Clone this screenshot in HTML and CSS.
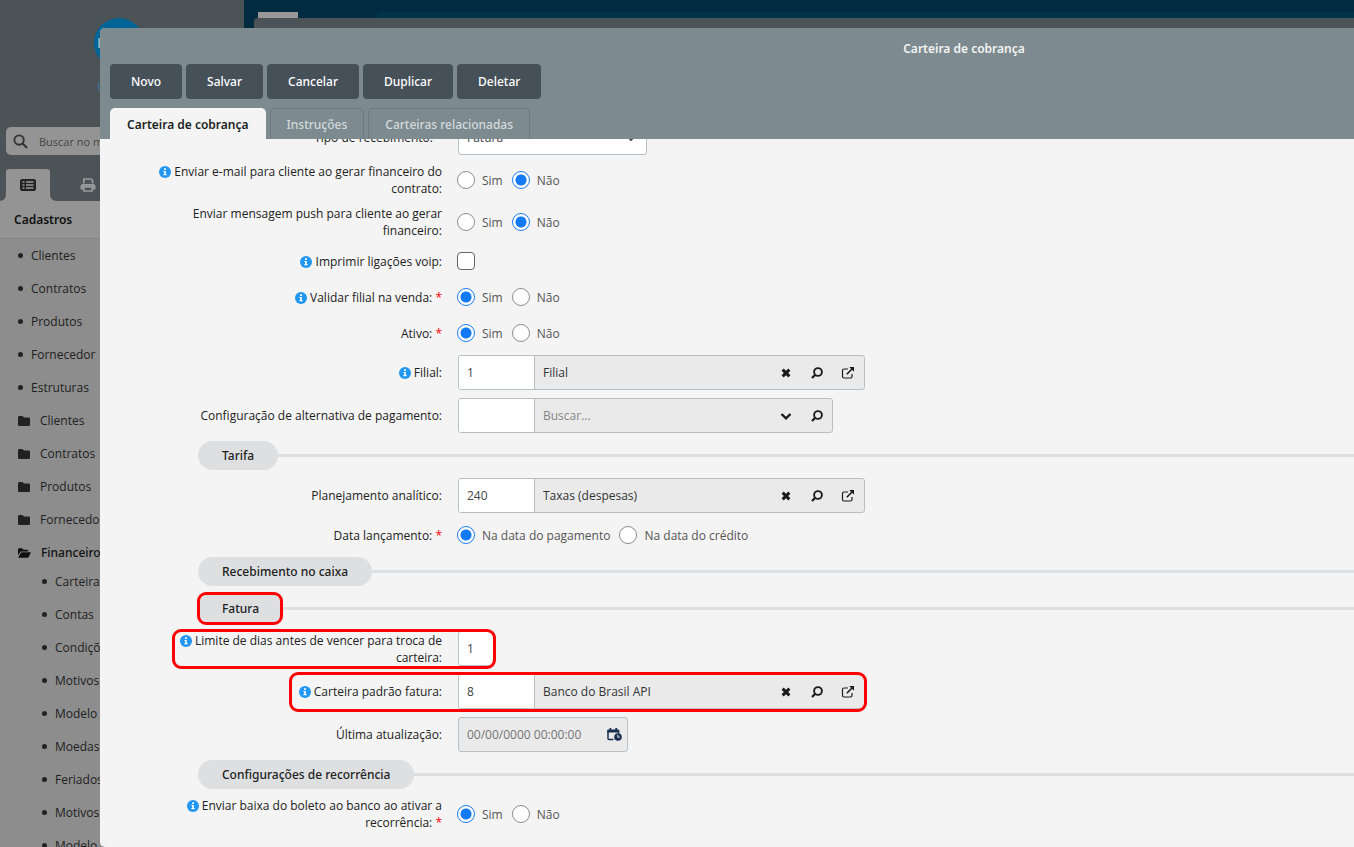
FILE: index.html
```html
<!DOCTYPE html>
<html lang="pt-BR">
<head>
<meta charset="utf-8">
<title>Carteira de cobrança</title>
<link rel="stylesheet" href="styles.css">
</head>
<body>
<svg class="sprite" aria-hidden="true">
  <symbol id="i-info" viewBox="0 0 12 12"><circle cx="6" cy="6" r="6" fill="#2196f3"/><path d="M5.1 2.3h1.8v1.6H5.1zM4.4 4.9h2.4v3.2h.8v1.2H4.4V8.100h.8v-2h-.8z" fill="#fff"/></symbol>
  <symbol id="i-x" viewBox="0 0 10 10"><path d="M2.200 2.200l5.600 5.600M7.800 2.200l-5.600 5.600" stroke="currentColor" stroke-width="2.500"/></symbol>
  <symbol id="i-search" viewBox="0 0 12 12"><circle cx="7" cy="5" r="3.900" fill="none" stroke="currentColor" stroke-width="1.900"/><path d="M4.300 7.700L1 11" stroke="currentColor" stroke-width="2.300"/></symbol>
  <symbol id="i-open" viewBox="0 0 14 14"><path d="M7 3H3Q1.500 3 1.500 4.500v6Q1.500 12 3 12h6.500Q11 12 11 10.500V8" fill="none" stroke="currentColor" stroke-width="1.200"/><path d="M5.800 8.200L11 3" stroke="currentColor" stroke-width="1.600"/><path d="M8.200 1H13v4.800z" fill="currentColor"/></symbol>
  <symbol id="i-down" viewBox="0 0 12 12"><path d="M1.500 4L6 8.300 10.500 4" fill="none" stroke="currentColor" stroke-width="2.400"/></symbol>
  <symbol id="i-folder" viewBox="0 0 12 10"><path d="M1.200 0h3.300L6 1.500h4.800Q12 1.500 12 2.700v6Q12 10 10.800 10H1.200Q0 10 0 8.800V1.200Q0 0 1.200 0z" fill="currentColor"/></symbol>
  <symbol id="i-folder-open" viewBox="0 0 14 10"><path d="M0 7.500V1.200Q0 0 1.200 0h3.300L6 1.500h4Q11 1.500 11 2.700v.8H3.800Q2.600 3.500 2.100 4.400zM.4 9.500L2.900 5q.4-.7 1.200-.7h9.200q.7 0 .4.700L11.500 9.300q-.4.700-1.200.7H.8Q.2 10 .4 9.500z" fill="currentColor"/></symbol>
</svg>

<div class="app">
  <aside class="sidebar">
    <div class="profile"><span class="avatar">I</span><span class="user">I</span></div>
    <label class="menu-search">
      <svg viewBox="0 0 16 16"><circle cx="6.500" cy="6.500" r="5" fill="none" stroke="currentColor" stroke-width="2"/><path d="M10.200 10.200L15 15" stroke="currentColor" stroke-width="2.200"/></svg>
      <input type="text" placeholder="Buscar no menu" aria-label="Buscar no menu">
    </label>
    <div class="side-tabs">
      <button class="side-tab active" aria-label="Menu"><svg viewBox="0 0 16 12"><rect width="16" height="12" rx="2" fill="#222"/><path d="M2.500 3h2M2.500 6h2M2.500 9h2M6 3h7.500M6 6h7.500M6 9h7.500" stroke="#999" stroke-width="1.300"/></svg></button>
      <button class="side-tab" aria-label="Imprimir"><svg viewBox="0 0 16 14"><path d="M3.800 5.500V1h7.400l1.300 1.300V5.500" fill="none" stroke="#999" stroke-width="1.700"/><path d="M3 6h10q2.500 0 2.500 2.500V11.500h-2.500V8.800H3v2.700H.5V8.500Q.5 6 3 6z" fill="#999"/><path d="M3.800 9h8.400v4H3.800z" fill="none" stroke="#999" stroke-width="1.700"/></svg></button>
    </div>
    <h2 class="side-title">Cadastros</h2>
    <ul class="menu">
      <li><i class="dot"></i><a href="#">Clientes</a></li>
      <li><i class="dot"></i><a href="#">Contratos</a></li>
      <li><i class="dot"></i><a href="#">Produtos</a></li>
      <li><i class="dot"></i><a href="#">Fornecedor</a></li>
      <li><i class="dot"></i><a href="#">Estruturas</a></li>
      <li class="folder"><svg><use href="#i-folder"/></svg><a href="#">Clientes</a></li>
      <li class="folder"><svg><use href="#i-folder"/></svg><a href="#">Contratos</a></li>
      <li class="folder"><svg><use href="#i-folder"/></svg><a href="#">Produtos</a></li>
      <li class="folder"><svg><use href="#i-folder"/></svg><a href="#">Fornecedor</a></li>
      <li class="folder open"><svg><use href="#i-folder-open"/></svg><a href="#">Financeiro</a></li>
    </ul>
    <ul class="menu submenu">
      <li><i class="dot"></i><a href="#">Carteiras</a></li>
      <li><i class="dot"></i><a href="#">Contas</a></li>
      <li><i class="dot"></i><a href="#">Condições</a></li>
      <li><i class="dot"></i><a href="#">Motivos</a></li>
      <li><i class="dot"></i><a href="#">Modelo</a></li>
      <li><i class="dot"></i><a href="#">Moedas</a></li>
      <li><i class="dot"></i><a href="#">Feriados</a></li>
      <li><i class="dot"></i><a href="#">Motivos</a></li>
      <li><i class="dot"></i><a href="#">Modelo</a></li>
    </ul>
  </aside>
  <div class="workspace">
    <div class="topbar"><span class="top-tab"></span><span class="top-search"></span></div>
    <div class="back-window"></div>
  </div>
</div>

<main class="modal">
  <header class="modal-head">
    <h1>Carteira de cobrança</h1>
    <div class="actions">
      <button>Novo</button><button>Salvar</button><button>Cancelar</button><button>Duplicar</button><button>Deletar</button>
    </div>
    <nav class="tabs">
      <button class="tab active">Carteira de cobrança</button><button class="tab">Instruções</button><button class="tab">Carteiras relacionadas</button>
    </nav>
  </header>
  <div class="modal-body">
    <form class="form">
      <div class="row">
        <label class="label shifted" for="tipo">Tipo de recebimento:</label>
        <div class="select box"><select id="tipo"><option>Fatura</option></select><svg><use href="#i-down"/></svg></div>
      </div>
      <div class="row">
        <span class="label"><svg class="info"><use href="#i-info"/></svg> Enviar e-mail para cliente ao gerar financeiro do contrato:</span>
        <div class="options"><label><input type="radio" name="email">Sim</label><label><input type="radio" name="email" checked>Não</label></div>
      </div>
      <div class="row">
        <span class="label">Enviar mensagem push para cliente ao gerar financeiro:</span>
        <div class="options"><label><input type="radio" name="push">Sim</label><label><input type="radio" name="push" checked>Não</label></div>
      </div>
      <div class="row">
        <label class="label" for="voip"><svg class="info"><use href="#i-info"/></svg> Imprimir ligações voip:</label>
        <div class="options"><input type="checkbox" id="voip"></div>
      </div>
      <div class="row">
        <span class="label"><svg class="info"><use href="#i-info"/></svg> Validar filial na venda: <b>*</b></span>
        <div class="options"><label><input type="radio" name="validar" checked>Sim</label><label><input type="radio" name="validar">Não</label></div>
      </div>
      <div class="row">
        <span class="label">Ativo: <b>*</b></span>
        <div class="options"><label><input type="radio" name="ativo" checked>Sim</label><label><input type="radio" name="ativo">Não</label></div>
      </div>
      <div class="row">
        <label class="label" for="filial"><svg class="info"><use href="#i-info"/></svg> Filial:</label>
        <div class="lookup box"><input class="code" id="filial" value="1"><input class="desc" value="Filial" aria-label="Filial"><button type="button" aria-label="Limpar"><svg><use href="#i-x"/></svg></button><button type="button" aria-label="Buscar"><svg><use href="#i-search"/></svg></button><button type="button" aria-label="Abrir"><svg class="big"><use href="#i-open"/></svg></button></div>
      </div>
      <div class="row">
        <label class="label" for="alt">Configuração de alternativa de pagamento:</label>
        <div class="lookup box"><input class="code" id="alt"><input class="desc" placeholder="Buscar..." aria-label="Alternativa de pagamento"><button type="button" aria-label="Expandir"><svg><use href="#i-down"/></svg></button><button type="button" aria-label="Buscar"><svg><use href="#i-search"/></svg></button></div>
      </div>
      <div class="section"><h2>Tarifa</h2></div>
      <div class="row">
        <label class="label" for="plan">Planejamento analítico:</label>
        <div class="lookup box"><input class="code" id="plan" value="240"><input class="desc" value="Taxas (despesas)" aria-label="Planejamento analítico"><button type="button" aria-label="Limpar"><svg><use href="#i-x"/></svg></button><button type="button" aria-label="Buscar"><svg><use href="#i-search"/></svg></button><button type="button" aria-label="Abrir"><svg class="big"><use href="#i-open"/></svg></button></div>
      </div>
      <div class="row">
        <span class="label">Data lançamento: <b>*</b></span>
        <div class="options"><label><input type="radio" name="data" checked>Na data do pagamento</label><label><input type="radio" name="data">Na data do crédito</label></div>
      </div>
      <div class="section"><h2>Recebimento no caixa</h2></div>
      <div class="section"><h2>Fatura<span class="mark mark-title"></span></h2></div>
      <div class="row">
        <label class="label" for="limite"><svg class="info"><use href="#i-info"/></svg> Limite de dias antes de vencer para troca de carteira:</label>
        <input class="days box" id="limite" value="1"><span class="mark mark-limit"></span>
      </div>
      <div class="row">
        <label class="label" for="padrao"><svg class="info"><use href="#i-info"/></svg> Carteira padrão fatura:</label>
        <div class="lookup box"><input class="code" id="padrao" value="8"><input class="desc" value="Banco do Brasil API" aria-label="Carteira padrão"><button type="button" aria-label="Limpar"><svg><use href="#i-x"/></svg></button><button type="button" aria-label="Buscar"><svg><use href="#i-search"/></svg></button><button type="button" aria-label="Abrir"><svg class="big"><use href="#i-open"/></svg></button></div><span class="mark mark-wallet"></span>
      </div>
      <div class="row">
        <label class="label" for="ultima">Última atualização:</label>
        <div class="date box"><input id="ultima" placeholder="00/00/0000 00:00:00"><svg viewBox="0 0 15 13"><path d="M6.500 11.500H2Q1 11.500 1 10.500V3h10.500v2.500" fill="none" stroke="currentColor" stroke-width="1.500"/><path d="M.3 4.500V2.500Q.3 1.500 1.300 1.500h1.200V0H4.300v1.500h4V0h1.800v1.500h1.100q1 0 1 1v2z" fill="currentColor"/><circle cx="11" cy="9" r="3.800" fill="currentColor"/><path d="M10.800 6.800v2.400h1.900" fill="none" stroke="#eee" stroke-width="1"/></svg></div>
      </div>
      <div class="section"><h2>Configurações de recorrência</h2></div>
      <div class="row">
        <span class="label"><svg class="info"><use href="#i-info"/></svg> Enviar baixa do boleto ao banco ao ativar a recorrência: <b>*</b></span>
        <div class="options"><label><input type="radio" name="baixa" checked>Sim</label><label><input type="radio" name="baixa">Não</label></div>
      </div>
    </form>
  </div>
</main>
</body>
</html>
```
FILE: styles.css
```css
* { box-sizing: border-box; }
html, body { height: 100%; }
body {
  margin: 0;
  overflow: hidden;
  position: relative;
  font: 12px/17px "Open Sans", "Noto Sans", sans-serif;
  color: #212121;
}
.sprite { position: absolute; width: 0; height: 0; }
button, input, select { font: inherit; color: inherit; border: 0; padding: 0; margin: 0; background: none; outline: 0; }
h1, h2 { margin: 0; font-size: 12px; }
h1, h2, .modal-head button, .menu .open { font-family: "Noto Sans", "Open Sans", sans-serif; }

/* Dimmed application behind the dialog */
.app { display: flex; height: 100%; }
.sidebar { width: 244px; flex: none; display: flex; flex-direction: column; overflow: hidden; background: #4c5356; }
.profile { height: 127px; flex: none; padding-top: 18px; display: flex; flex-direction: column; align-items: flex-start; padding-left: 94px; gap: 10px; }
.avatar { width: 50px; height: 50px; border-radius: 50%; background: #006497; color: #a9b8c4; line-height: 50px; padding-left: 3px; font-weight: 600; font-size: 14px; }
.user { color: #3f78a8; padding-left: 3px; }
.menu-search { height: 28px; flex: none; margin: 0 6px; border-radius: 5px; background: #949494; display: flex; align-items: center; gap: 11px; padding-left: 7px; color: #333; }
.menu-search svg { width: 15px; height: 15px; }
.menu-search input { flex: 1; font-size: 11px; }
.menu-search input::placeholder { color: #444; opacity: 1; }
.side-tabs { display: flex; flex: none; margin-top: 14px; padding-left: 6px; height: 32px; gap: 16px; }
.side-tab { width: 44px; display: flex; align-items: center; justify-content: center; }
.side-tab.active { position: relative; background: #949494; border-radius: 3px 3px 0 0; }
.side-tab.active::before, .side-tab.active::after { content: ""; position: absolute; bottom: 0; width: 5px; height: 5px; }
.side-tab.active::before { right: 100%; background: radial-gradient(circle at 0 0, #4c5356 4px, #949494 5px); }
.side-tab.active::after { left: 100%; background: radial-gradient(circle at 100% 0, #4c5356 4px, #949494 5px); }
.side-tab svg { width: 16px; height: 14px; }
.side-title { flex: none; padding: 10px 14px; height: 38px; background: #949494; border-bottom: 1px solid #858585; font-weight: 600; color: #111; }
.menu { list-style: none; margin: 0; padding: 0 18px; background: #8d8d8d; }
.menu li { height: 33px; display: flex; align-items: center; gap: 8px; }
.menu .folder { gap: 10px; }
.menu .open { font-weight: 500; color: #111; }
.menu svg { width: 12px; height: 10px; }
.menu .open svg { width: 13px; }
.menu a { color: inherit; text-decoration: none; }
.dot { width: 5px; height: 5px; border-radius: 50%; background: #222; }
.submenu { flex: 1 0 auto; padding-left: 42px; margin-top: -4px; }
.workspace { flex: 1; background: #002b40; display: flex; flex-direction: column; }
.topbar { height: 18px; padding: 12px 0 0 14px; display: flex; gap: 78px; }
.top-tab { width: 40px; background: #989898; }
.top-search { flex: 1; background: #003249; border-radius: 14px 0 0 0; }
.back-window { flex: 1; margin-left: 10px; background: #4c5356; border-radius: 4px 0 0 0; }

/* Dialog */
.modal { position: absolute; inset: 28px 0 0 100px; display: flex; flex-direction: column; overflow: hidden; border-radius: 5px 0 0 5px; background: #f4f4f4; }
.modal-head { flex: none; background: #7d8a8f; padding: 0 10px; }
.modal-head h1 { padding: 12px 0 7px 474px; margin-right: -10px; margin-left: -10px; text-align: center; color: #f4f4f4; font-weight: 600; }
.actions { display: flex; gap: 4px; }
.actions button { height: 35px; padding: 0 21px; border-radius: 4px; background: #465059; color: #fff; font-weight: 500; }
.tabs { display: flex; gap: 4px; padding-top: 9px; }
.tab { height: 31px; padding: 0 16px; border: 1px solid #6c797e; border-bottom: 0; border-radius: 5px 5px 0 0; color: #d5dadc; font-weight: 500; }
.tab.active { background: #f4f4f4; border-color: #f4f4f4; color: #1b1f22; font-weight: 600; }
.modal-body { flex: 1; min-height: 0; overflow: hidden; }
.form { display: flex; flex-direction: column; gap: 8px; margin-top: -19px; }
.row { position: relative; display: flex; align-items: center; gap: 15px; min-height: 28px; }
.label { width: 342px; flex: none; padding-left: 54px; text-align: right; }
.label.shifted { padding-right: 9px; }
.label b { color: #f00; font-weight: 400; }
.info { width: 12px; height: 12px; vertical-align: -2px; }
.options { display: flex; gap: 9px; color: #555; }
.options label { display: flex; align-items: center; gap: 7px; }
.options input { appearance: none; width: 18px; height: 18px; flex: none; border: 1px solid #8c8c96; background: #fff; }
input[type="radio"] { border-radius: 50%; }
input[type="radio"]:checked { border-color: #1a7cf5; background: radial-gradient(circle, #147af3 5px, #fff 6px); }
input[type="checkbox"] { border-radius: 4px; border-color: #666; }
.box { height: 35px; margin-left: 1px; border: 1px solid #b9bfc3; border-radius: 3px; overflow: hidden; color: #444; display: flex; align-items: center; }
.lookup { background: #eaeaea; }
.lookup input { height: 100%; padding: 0 8px; }
.lookup .code { width: 76px; background: #fff; border-right: 1px solid #b9bfc3; }
.lookup .desc { width: 235px; color: #333; }
.lookup button { width: 31px; height: 100%; display: grid; place-items: center; color: #1b1b1b; }
.lookup svg { width: 12px; height: 12px; }
.lookup svg.big { width: 14px; height: 14px; }
.lookup button:nth-child(5) { width: 32px; }
.box ::placeholder { color: #858585; opacity: 1; }
.select { position: relative; width: 189px; background: #fff; }
.select select { appearance: none; width: 100%; height: 100%; padding: 0 8px; }
.select svg { position: absolute; right: 10px; width: 10px; height: 10px; pointer-events: none; }
input.days { width: 37px; padding: 0 8px; background: #fff; }
.date { width: 170px; background: #eaeaea; padding: 0 5px 0 8px; }
.date input { flex: 1; min-width: 0; }
.date svg { width: 15px; height: 13px; color: #1b2f50; }
.date ::placeholder { color: #757575; }
.section { display: flex; align-items: center; margin-left: 98px; }
.section::after { content: ""; flex: 1; height: 3px; background: #dddfe1; }
.section h2 { position: relative; height: 29px; line-height: 29px; padding: 0 24px; border-radius: 15px; background: #dddfe1; font-weight: 500; }

/* Highlight frames */
.mark { position: absolute; border: 3px solid #f00; border-radius: 9px; pointer-events: none; }
.mark-title { inset: -2px 0 -2px -1px; }
.mark-limit { inset: -2px auto -3px 72px; width: 324px; }
.mark-wallet { inset: -2px auto -3px 189px; width: 578px; }
```
